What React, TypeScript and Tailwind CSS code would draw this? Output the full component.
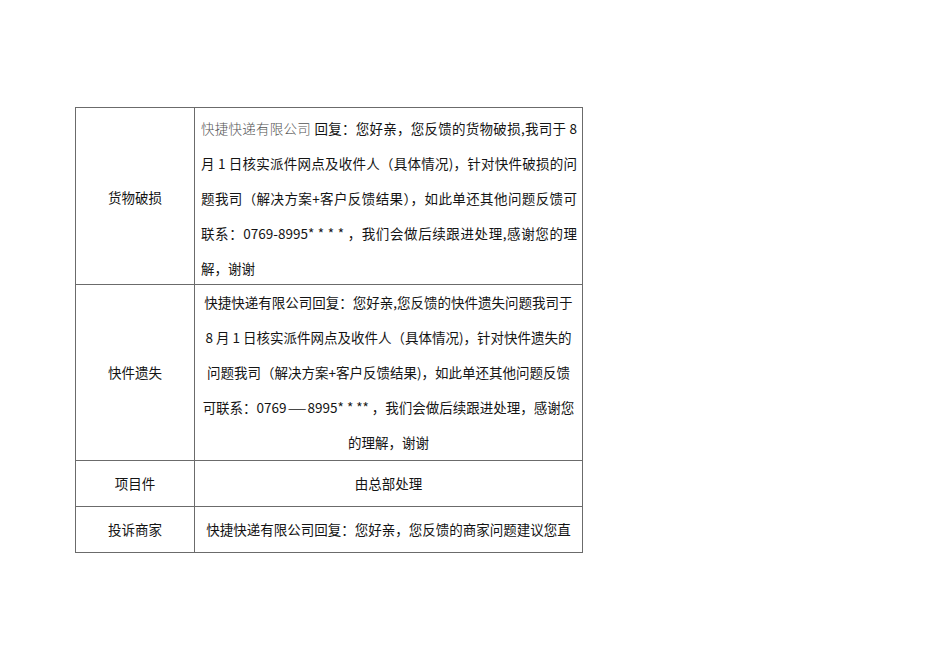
import React from "react";

const font = { fontFamily: '"Noto Sans CJK SC", "Noto Sans", sans-serif' };

export default function App() {
  const j = "text-justify [text-align-last:justify] whitespace-pre";
  return (
    <div className="w-[950px] h-[672px] bg-white pt-[107px] pl-[75px]" style={font}>
      <div className="w-[508px] border border-[#6b6b6b] text-[13.5px] text-[#141414] leading-[35px]">
        <div className="grid grid-cols-[119px_1fr] h-[177px] border-b border-[#6b6b6b]">
          <div className="flex items-center justify-center border-r border-[#6b6b6b]">货物破损</div>
          <div className="pl-[6px] pr-[5px] pt-[3px]">
            <div className={j}><span className="text-[#555] font-light">快捷快递有限公司</span> 回复：您好亲，您反馈的货物破损,我司于 8</div>
            <div className={j}>月 1 日核实派件网点及收件人（具体情况)，针对快件破损的问</div>
            <div className={j}>题我司（解决方案+客户反馈结果），如此单还其他问题反馈可</div>
            <div className={j}>联系：0769-8995* * * * ，我们会做后续跟进处理,感谢您的理</div>
            <div className="whitespace-pre">解，谢谢</div>
          </div>
        </div>
        <div className="grid grid-cols-[119px_1fr] h-[176px] border-b border-[#6b6b6b]">
          <div className="flex items-center justify-center border-r border-[#6b6b6b]">快件遗失</div>
          <div className="text-center">
            <div className="whitespace-pre">快捷快递有限公司回复：您好亲,您反馈的快件遗失问题我司于</div>
            <div className="whitespace-pre">8 月 1 日核实派件网点及收件人（具体情况)，针对快件遗失的</div>
            <div className="whitespace-pre">问题我司（解决方案+客户反馈结果)，如此单还其他问题反馈</div>
            <div className="whitespace-pre">可联系：0769<span className="inline-block w-[21px] text-center"><span className="inline-block scale-x-[1.6]">—</span></span>8995* * ** ，我们会做后续跟进处理，感谢您</div>
            <div className="whitespace-pre">的理解，谢谢</div>
          </div>
        </div>
        <div className="grid grid-cols-[119px_1fr] h-[46px] border-b border-[#6b6b6b]">
          <div className="flex items-center justify-center border-r border-[#6b6b6b]">项目件</div>
          <div className="flex items-center justify-center">由总部处理</div>
        </div>
        <div className="grid grid-cols-[119px_1fr] h-[45px]">
          <div className="flex items-center justify-center border-r border-[#6b6b6b]">投诉商家</div>
          <div className="flex items-center justify-center whitespace-pre">快捷快递有限公司回复：您好亲，您反馈的商家问题建议您直</div>
        </div>
      </div>
    </div>
  );
}
